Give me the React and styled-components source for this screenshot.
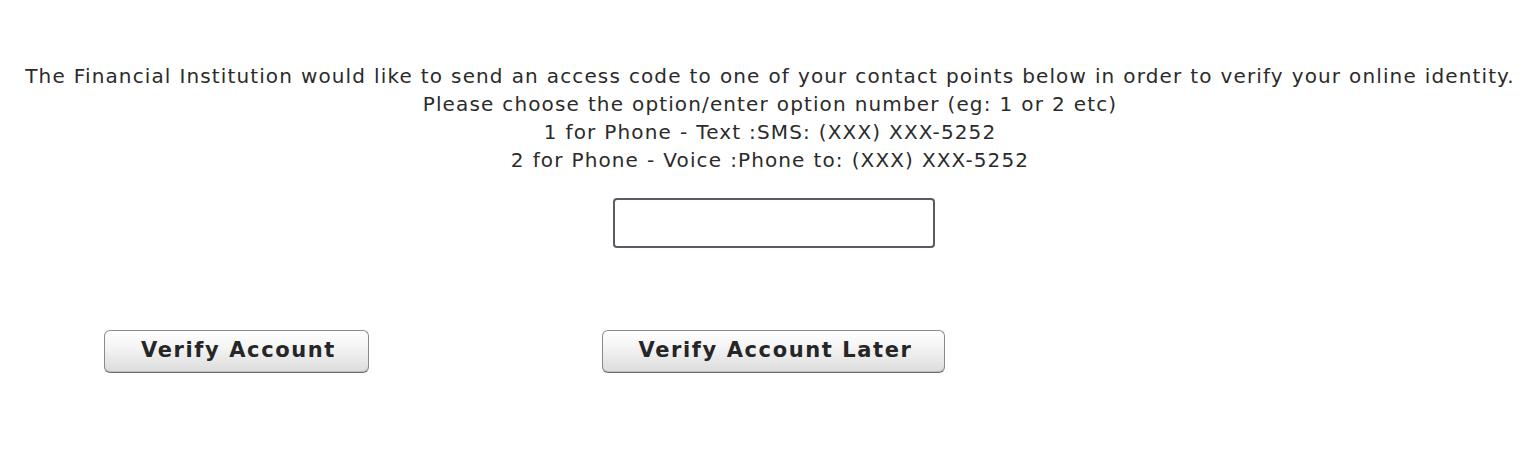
import React from "react";
import styled, { createGlobalStyle } from "styled-components";

const Global = createGlobalStyle`
  html, body { margin: 0; padding: 0; background: #fff; }
  body { font-family: Verdana, "DejaVu Sans", sans-serif; color: #2b2b2b; }
`;

const Page = styled.div`
  width: 1540px;
  padding-top: 62px;
`;

const Message = styled.div`
  text-align: center;
  font-size: 20px;
  line-height: 28px;
  letter-spacing: 1.12px;
  word-spacing: 0.5px;
`;

const Line = styled.div``;

const InputRow = styled.div`
  display: flex;
  justify-content: center;
  padding-left: 7px;
  margin-top: 24px;
`;

const CodeInput = styled.input`
  width: 322px;
  height: 50px;
  box-sizing: border-box;
  border: 2px solid #5b5a66;
  border-radius: 4px;
  background: #fff;
  outline: none;
`;

const ButtonRow = styled.div`
  display: flex;
  align-items: center;
  padding-left: 104px;
  gap: 233px;
  margin-top: 82px;
`;

const Button = styled.button`
  width: ${(p) => p.$w}px;
  height: 43px;
  box-sizing: border-box;
  border: 1px solid #8a8a8a;
  border-bottom-color: #6f6f6f;
  border-radius: 6px;
  background: linear-gradient(#ffffff 0%, #f4f4f4 40%, #dcdcdc 100%);
  box-shadow: inset 0 -1px 0 #bdbdbd, inset 0 1px 0 #fff;
  font-family: Verdana, "DejaVu Sans", sans-serif;
  font-weight: bold;
  font-size: 21px;
  letter-spacing: 1.6px;
  color: #262626;
  padding: 0 0 3px 4px;
  cursor: pointer;
`;

export default function App() {
  return (
    <>
      <Global />
      <Page>
        <Message>
          <Line>
            The Financial Institution would like to send an access code to one of your contact points below in order to verify your online identity.
          </Line>
          <Line>Please choose the option/enter option number (eg: 1 or 2 etc)</Line>
          <Line>1 for Phone - Text :SMS: (XXX) XXX-5252</Line>
          <Line>2 for Phone - Voice :Phone to: (XXX) XXX-5252</Line>
        </Message>
        <InputRow>
          <CodeInput type="text" />
        </InputRow>
        <ButtonRow>
          <Button $w={265}>Verify Account</Button>
          <Button $w={343}>Verify Account Later</Button>
        </ButtonRow>
      </Page>
    </>
  );
}
